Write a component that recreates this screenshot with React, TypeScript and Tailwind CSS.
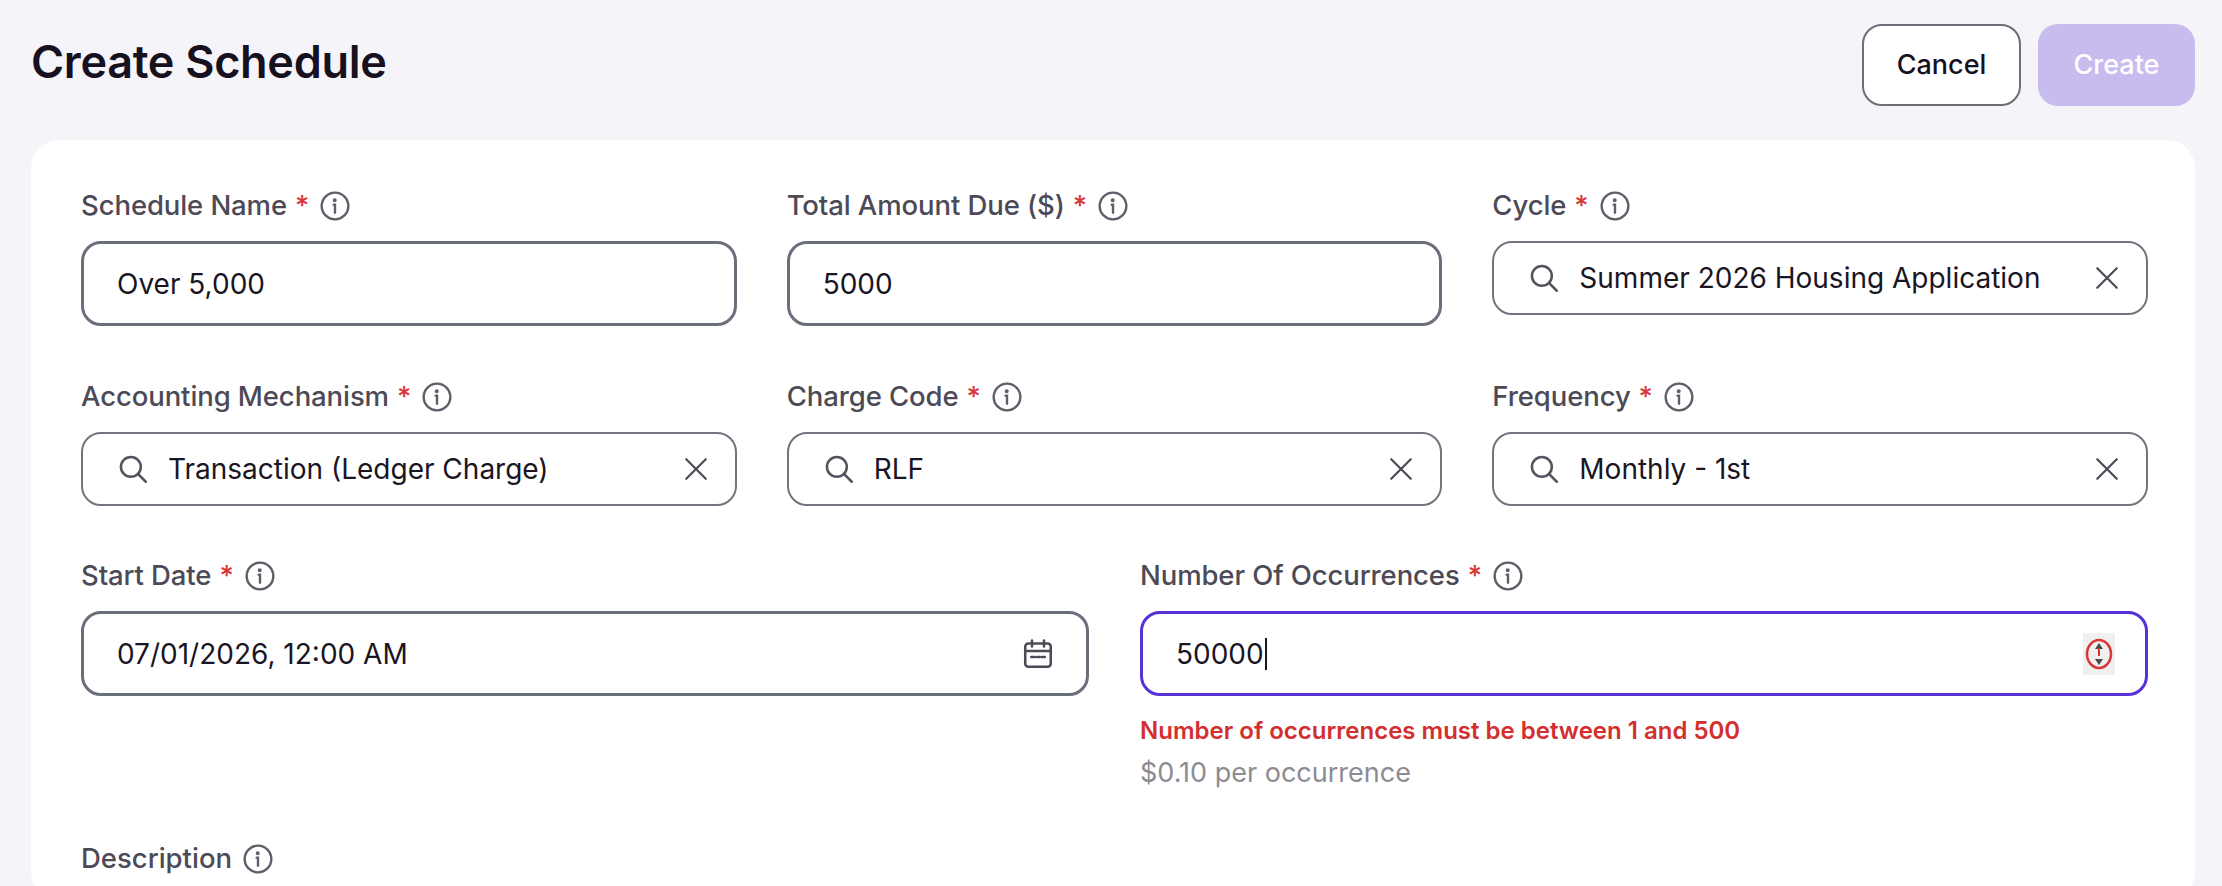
import React from "react";

const font = { fontFamily: "Inter, 'Noto Sans', sans-serif" };

function Info() {
  return (
    <svg width="32" height="32" viewBox="0 0 24 24" fill="none" stroke="#5f5d69" strokeWidth="1.8" strokeLinecap="round">
      <circle cx="12" cy="12" r="10" />
      <path d="M11 11h1v6" />
      <circle cx="11.8" cy="7.6" r="0.6" fill="#5f5d69" />
    </svg>
  );
}

function Label({ text }: { text: string }) {
  return (
    <div className="flex items-center gap-[10px] h-[34px] text-[27.5px] font-medium text-[#4c4a56] tracking-[-0.1px]">
      <span>{text}</span>
      <span className="text-[#d93636] -ml-[2px]">*</span>
      <Info />
    </div>
  );
}

function Search() {
  return (
    <svg width="34" height="34" viewBox="0 0 24 24" fill="none" stroke="#55535f" strokeWidth="1.8" strokeLinecap="round">
      <circle cx="10.5" cy="10.5" r="7" />
      <path d="M15.5 15.5 21 21" />
    </svg>
  );
}

function XIcon() {
  return (
    <svg width="26" height="26" viewBox="0 0 24 24" fill="none" stroke="#4c4a56" strokeWidth="2" strokeLinecap="round">
      <path d="M3 3l18 18M21 3L3 21" />
    </svg>
  );
}

function TextInput({ value }: { value: string }) {
  return (
    <div className="mt-[18px] h-[85px] rounded-[20px] border-[3px] border-[#6b6f7b] bg-white flex items-center pl-[33px] text-[28px] text-[#1a1523]">
      {value}
    </div>
  );
}

function SelectInput({ value }: { value: string }) {
  return (
    <div className="mt-[18px] h-[74px] rounded-[20px] border-2 border-[#75737e] bg-white flex items-center pl-[33px] pr-[26px] text-[28px] text-[#1a1523]">
      <Search />
      <span className="ml-[18px] flex-1">{value}</span>
      <XIcon />
    </div>
  );
}

export default function App() {
  return (
    <div style={font} className="w-[2222px] h-[886px] overflow-hidden bg-[#f5f4f9] pl-[31px] pr-[27px]">
      <div className="flex justify-between pt-[24px] h-[140px] items-start">
        <h1 className="text-[45px] font-semibold text-[#17111f] mt-[4px] tracking-[-0.3px]">Create Schedule</h1>
        <div className="flex gap-[17px]">
          <button className="w-[159px] h-[82px] rounded-[20px] border-2 border-[#6f6d78] bg-white text-[27px] font-medium text-[#17111f]">Cancel</button>
          <button className="w-[157px] h-[82px] rounded-[20px] bg-[#c8bbee] text-[27px] font-medium text-white">Create</button>
        </div>
      </div>
      <div className="bg-white rounded-[28px] pl-[50px] pr-[47px] pt-[49px] h-[760px]">
        <div className="grid grid-cols-3 gap-x-[50px]">
          <div><Label text="Schedule Name" /><TextInput value="Over 5,000" /></div>
          <div><Label text="Total Amount Due ($)" /><TextInput value="5000" /></div>
          <div><Label text="Cycle" /><SelectInput value="Summer 2026 Housing Application" /></div>
        </div>
        <div className="grid grid-cols-3 gap-x-[50px] mt-[54px]">
          <div><Label text="Accounting Mechanism" /><SelectInput value="Transaction (Ledger Charge)" /></div>
          <div><Label text="Charge Code" /><SelectInput value="RLF" /></div>
          <div><Label text="Frequency" /><SelectInput value="Monthly - 1st" /></div>
        </div>
        <div className="grid grid-cols-2 gap-x-[51px] mt-[53px]">
          <div>
            <Label text="Start Date" />
            <div className="mt-[18px] h-[85px] rounded-[20px] border-[3px] border-[#6b6f7b] bg-white flex items-center pl-[33px] pr-[30px] text-[28px] text-[#1a1523]">
              <span className="flex-1">07/01/2026, 12:00 AM</span>
              <svg width="36" height="36" viewBox="0 0 24 24" fill="none" stroke="#4c4a56" strokeWidth="1.7" strokeLinecap="round">
                <rect x="3.5" y="5" width="17" height="15.5" rx="2" />
                <path d="M3.5 10h17M8 3v4M16 3v4M7.5 14h2M11 14h2M14.5 14h2" />
              </svg>
            </div>
          </div>
          <div>
            <Label text="Number Of Occurrences" />
            <div className="mt-[18px] h-[85px] rounded-[20px] border-[3px] border-[#5731d6] bg-white flex items-center pl-[33px] pr-[30px] text-[28px] text-[#1a1523]">
              <span>50000</span>
              <span className="w-[2px] h-[32px] bg-[#1a1523] ml-[1px]" />
              <span className="flex-1" />
              <div className="w-[32px] h-[42px] bg-[#f0f0f0] flex items-center justify-center">
                <svg width="30" height="36" viewBox="0 0 30 36" fill="none">
                  <ellipse cx="15" cy="18" rx="12" ry="14" stroke="#d93636" strokeWidth="2.5" />
                  <path d="M15 7l-4 6h8z" fill="#4a4a4a" />
                  <path d="M15 29l-4-6h8z" fill="#4a4a4a" />
                  <path d="M15 12v8" stroke="#d93636" strokeWidth="2" />
                </svg>
              </div>
            </div>
            <div className="mt-[20px] text-[24px] font-semibold text-[#d32f2f] h-[30px] leading-[30px]">Number of occurrences must be between 1 and 500</div>
            <div className="mt-[10px] text-[27px] text-[#8d8b94] leading-[34px]">$0.10 per occurrence</div>
          </div>
        </div>
        <div className="mt-[52px]"><div className="flex items-center gap-[10px] h-[34px] text-[27.5px] font-medium text-[#4c4a56]"><span>Description</span><Info /></div></div>
      </div>
    </div>
  );
}
